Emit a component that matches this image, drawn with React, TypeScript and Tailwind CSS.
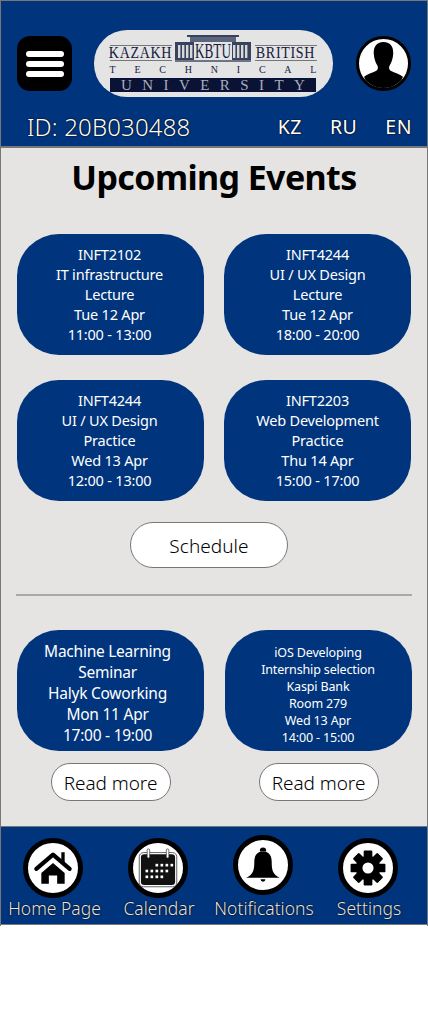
import type { ReactNode } from "react";

const font = "font-['Noto_Sans','Open_Sans',sans-serif]";

const classes = [
  ["INFT2102", "IT infrastructure", "Lecture", "Tue 12 Apr", "11:00 - 13:00"],
  ["INFT4244", "UI / UX Design", "Lecture", "Tue 12 Apr", "18:00 - 20:00"],
  ["INFT4244", "UI / UX Design", "Practice", "Wed 13 Apr", "12:00 - 13:00"],
  ["INFT2203", "Web Development", "Practice", "Thu 14 Apr", "15:00 - 17:00"],
];

function Card({ lines, className }: { lines: string[]; className: string }) {
  return (
    <div className={`flex h-[121px] w-[187px] flex-col items-center justify-center rounded-[42px] bg-[#00347c] text-center text-white ${className}`}>
      {lines.map((l, i) => (
        <div key={i} className="whitespace-nowrap">{l}</div>
      ))}
    </div>
  );
}

function ReadMore() {
  return (
    <button className="mt-3 h-[38px] w-[120px] rounded-[19px] border border-[#777] bg-white pt-[3px] text-[19px] font-[350] tracking-[-0.05px] text-black">
      Read more
    </button>
  );
}

function Round({ children, className = "" }: { children: ReactNode; className?: string }) {
  return (
    <div className={`flex h-[60px] w-[60px] items-center justify-center rounded-full border-[5px] border-black bg-white ${className}`}>
      {children}
    </div>
  );
}

function HomeIcon() {
  return (
    <svg viewBox="0 0 48 48" className="h-[40px] w-[40px]">
      <path d="M4 25 24 8l20 17" fill="none" stroke="#000" strokeWidth="5" strokeLinecap="round" strokeLinejoin="round" />
      <path d="M34 5h4v13l-4-4z" fill="#000" />
      <path d="M10 30 24 18l14 12v13h-9V33H19v10h-9z" fill="#000" />
    </svg>
  );
}

function CalendarIcon() {
  const dots = [
    [21, 19], [27, 19], [33, 19], [39, 19],
    [9, 26], [15, 26], [21, 26], [27, 26], [33, 26],
    [9, 33], [15, 33], [21, 33], [27, 33],
  ];
  return (
    <svg viewBox="0 0 48 48" className="h-[40px] w-[40px]">
      <rect x="1.500" y="5.500" width="45" height="41" rx="5" fill="#fff" stroke="#444" />
      <rect x="3.500" y="7.500" width="41" height="37" rx="4" fill="#111" />
      <rect x="11" y="1" width="3" height="11" rx="1.500" fill="#fff" stroke="#333" strokeWidth="0.8" />
      <rect x="34" y="1" width="3" height="11" rx="1.500" fill="#fff" stroke="#333" strokeWidth="0.8" />
      {dots.map(([x, y]) => (
        <rect key={`${x}-${y}`} x={x} y={y} width="3.200" height="3.200" fill="#fff" />
      ))}
    </svg>
  );
}

function BellIcon() {
  return (
    <svg viewBox="0 0 48 48" className="h-[38px] w-[38px]">
      <path d="M20 6a4 4 0 0 1 8 0v1h-8z" fill="#000" />
      <path d="M24 7c-8 0-11 6-11 13 0 9-1 13-5 17-1 1-3 2-5 3h42c-2-1-4-2-5-3-4-4-5-8-5-17 0-7-3-13-11-13z" fill="#000" />
      <path d="M21 42h6a3 3 0 0 1-6 0z" fill="#000" />
    </svg>
  );
}

function GearIcon() {
  return (
    <svg viewBox="0 0 48 48" className="h-[38px] w-[38px]">
      <g fill="#000">
        {[0, 45, 90, 135, 180, 225, 270, 315].map((a) => (
          <rect key={a} x="18.500" y="2" width="11" height="12" rx="1.500" transform={`rotate(${a} 24 24)`} />
        ))}
      </g>
      <circle cx="24" cy="24" r="15.500" fill="#000" />
      <circle cx="24" cy="24" r="7" fill="#fff" />
    </svg>
  );
}

function Logo() {
  return (
    <div className="mr-[2px] flex h-[67px] w-[239px] flex-col items-center rounded-[33px] bg-[#e4e4e4] pt-[5px] font-['Liberation_Serif',serif] text-[#14203f]">
      <div className="flex h-[27px] w-[207px] items-end justify-between">
        <span className="mb-[1px] flex h-[16px] w-[62px] items-center justify-center border-y border-[#777] text-[14px] leading-none tracking-[0.7px]">
          <span className="inline-block scale-y-125">KAZAKH</span>
        </span>
        <svg viewBox="0 0 76 27" className="h-[27px] w-[76px]">
          <path d="M12 0h52v2H12z" fill="#39425c" />
          <path d="M15 2h46v5H15z" fill="#5d657d" />
          <path d="M0 7h76v18H0z" fill="#39425c" />
          <path d="M0 25h76v2H0z" fill="#6d7488" />
          {[3, 7, 11, 15, 58, 62, 66, 70].map((x) => (
            <rect key={x} x={x} y="10" width="2.400" height="13" fill="#d8d8d8" />
          ))}
          <path d="M19 7h38v18H19z" fill="#e4e4e4" />
          <text x="38" y="23" textAnchor="middle" textLength="36" lengthAdjust="spacingAndGlyphs" fontSize="20" fill="#14203f">KBTU</text>
        </svg>
        <span className="mb-[1px] flex h-[16px] w-[62px] items-center justify-center border-y border-[#777] text-[14px] leading-none tracking-[0.7px]">
          <span className="inline-block scale-y-125">BRITISH</span>
        </span>
      </div>
      <div className="flex h-[16px] w-[207px] items-center justify-between text-[10px] leading-none">
        {"TECHNICAL".split("").map((c, i) => (
          <span key={i}>{c}</span>
        ))}
      </div>
      <div className="flex h-[14px] w-[206px] items-center justify-between bg-[#0a1236] px-[11px] text-[15px] leading-none text-[#a9adba]">
        {"UNIVERSITY".split("").map((c, i) => (
          <span key={i}>{c}</span>
        ))}
      </div>
    </div>
  );
}

export default function App() {
  const outline = "[text-shadow:0_0_1.5px_#000,0_0_1px_#000]";
  return (
    <div className={`h-[1009px] w-[428px] bg-white ${font}`}>
      <div className="h-[926px] border border-[#777] border-b-0">
        <header className="h-[147px] border-b-2 border-[#777] bg-[#00347c]">
          <div className="flex items-center justify-between pl-4 pr-4 pt-[29px]">
            <button className="flex h-[55px] w-[55px] flex-col items-center justify-center gap-[4px] rounded-[13px] bg-black">
              <span className="h-[6px] w-[38px] rounded-full bg-white" />
              <span className="h-[6px] w-[38px] rounded-full bg-white" />
              <span className="h-[6px] w-[38px] rounded-full bg-white" />
            </button>
            <Logo />
            <div className="h-[55px] w-[55px] overflow-hidden rounded-full border-[3px] border-black bg-white">
              <svg viewBox="0 0 48 48" className="h-full w-full">
                <path d="M24 3c-7 0-10 5-9.500 12 .3 4 1.500 8 3.500 11 1 2 .5 4-1 5-4 2-9 3-12 6l4 11h30l4-11c-3-3-8-4-12-6-1.500-1-2-3-1-5 2-3 3.200-7 3.500-11C34 8 31 3 24 3z" fill="#000" />
              </svg>
            </div>
          </div>
          <div className={`mt-[14px] flex items-center text-white ${outline}`}>
            <span className="ml-[26px] text-[24px] font-light leading-[32px] tracking-[0.15px]">ID: 20B030488</span>
            <div className="ml-auto mr-[15px] flex gap-[28px] text-[19.500px] leading-[32px] tracking-[0.5px]">
              <span>KZ</span>
              <span>RU</span>
              <span>EN</span>
            </div>
          </div>
        </header>

        <main className="h-[678px] bg-[#e5e4e2]">
          <h1 className="pt-[6px] text-center text-[34px] font-bold leading-[46px] tracking-[-0.6px] text-black">
            Upcoming Events
          </h1>
          <section className="mt-[34px] grid grid-cols-[187px_187px] justify-between gap-y-[25px] px-4 text-[14.5px] leading-[20px] tracking-[-0.2px]">
            {classes.map((c, i) => (
              <Card key={i} lines={c} className={i % 2 === 0 ? "pb-[2px] pr-[2px]" : "pb-[2px]"} />
            ))}
          </section>
          <div className="mt-[21px] flex justify-center pr-[10px]">
            <button className="h-[46px] w-[158px] rounded-[23px] border border-[#777] bg-white pt-[3px] text-[19px] font-[350] tracking-[0.05px] text-black">
              Schedule
            </button>
          </div>
          <hr className="mx-[15px] mt-[26px] border-t-2 border-[#a9a9a9]" />
          <section className="mt-[34px] grid grid-cols-[187px_187px] justify-between pl-4 pr-[15px]">
            <div className="flex flex-col items-center">
              <Card
                lines={["Machine Learning", "Seminar", "Halyk Coworking", "Mon 11 Apr", "17:00 - 19:00"]}
                className="pr-[6px] pt-[5px] text-[15.500px] leading-[21px] tracking-[-0.25px]"
              />
              <ReadMore />
            </div>
            <div className="flex flex-col items-center">
              <Card
                lines={["iOS Developing", "Internship selection", "Kaspi Bank", "Room 279", "Wed 13 Apr", "14:00 - 15:00"]}
                className="pr-[1px] pt-[9px] text-[12.500px] leading-[17px] tracking-[-0.15px]"
              />
              <ReadMore />
            </div>
          </section>
        </main>

        <nav className={`flex h-[99px] border-y border-[#777] bg-[#00347c] text-[17.500px] font-light leading-[24px] text-[#e6e6e6] ${outline}`}>
          <div className="flex w-[104px] flex-col items-center pt-[11px]">
            <Round><HomeIcon /></Round>
            <span className="-mt-[2px] ml-[3px] whitespace-nowrap">Home Page</span>
          </div>
          <div className="flex w-[105px] flex-col items-center pt-[11px]">
            <Round><CalendarIcon /></Round>
            <span className="-mt-[2px] ml-[3px] whitespace-nowrap">Calendar</span>
          </div>
          <div className="flex w-[105px] flex-col items-center pt-[8px]">
            <Round className="mb-[3px]"><BellIcon /></Round>
            <span className="-mt-[2px] ml-[3px] whitespace-nowrap">Notifications</span>
          </div>
          <div className="flex w-[105px] flex-col items-center pt-[11px]">
            <Round><GearIcon /></Round>
            <span className="-mt-[2px] ml-[3px] whitespace-nowrap">Settings</span>
          </div>
        </nav>
      </div>
    </div>
  );
}
